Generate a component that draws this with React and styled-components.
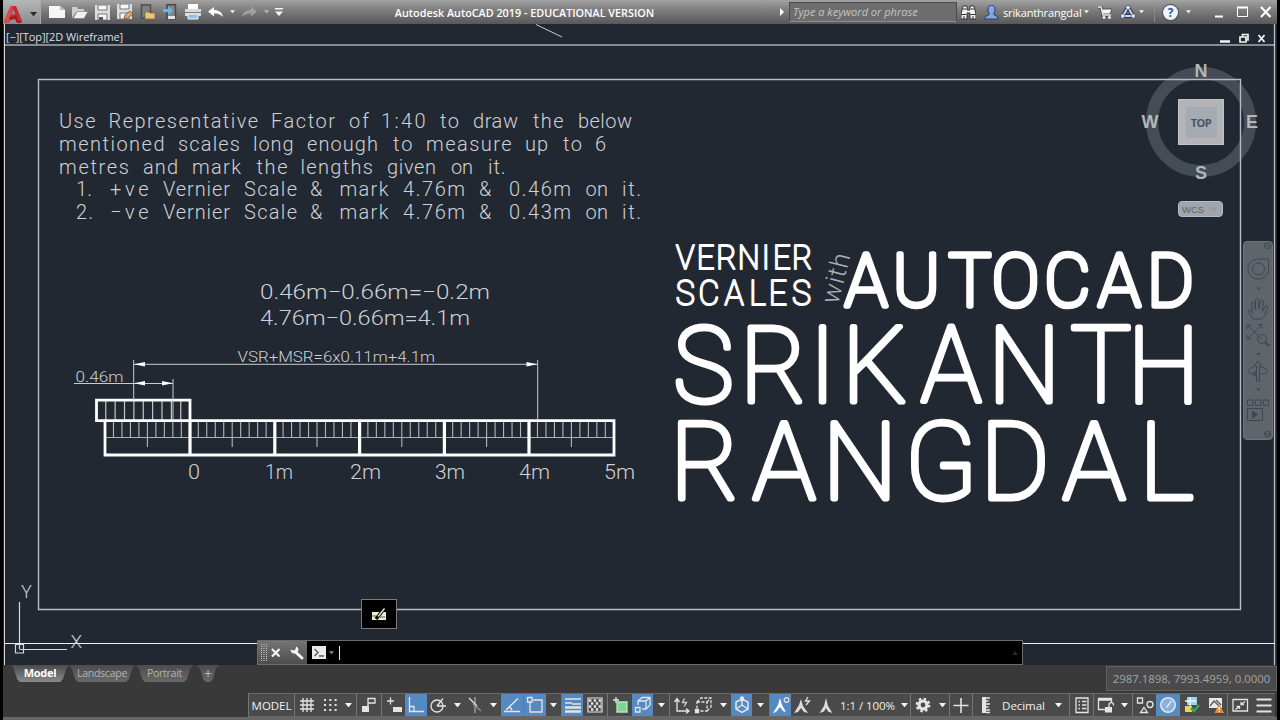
import React from 'react'
import styled, { createGlobalStyle } from 'styled-components'

const GlobalStyle = createGlobalStyle`
*{
  box-sizing: border-box;
}
body{
  margin: 0;
  background: #000;
  font-family: "Open Sans", "Noto Sans", sans-serif;
  overflow: hidden;
}
svg{
  display: block;
  flex: none;
}
`

/* ---------- title bar icons ---------- */

const Caret = ({ color = '#f2f2f2', size = 6 }) => (
  <svg width={size} height={size / 2 + 1} viewBox="0 0 8 5">
    <path d="M0 0h8L4 5z" fill={color} />
  </svg>
)

const titleIcons = {
  logo: (
    <svg width="19" height="18" viewBox="0 0 19 18">
      <path d="M0 17L6.500 1h5.500l6 15-3.500 1.500-2-4-6 1L4.500 18z" fill="#c62a30" />
      <path d="M7 9.500l2.300-5.500 2.200 5.500z" fill="#9b8a8a" />
      <path d="M0 17L6.500 1h2.500L4.500 18z" fill="#dd4a4e" />
      <path d="M5 12.500l7-2 2.500 6 3.500-.5-1 2-4 0-2-4-5 1z" fill="#a8181f" />
    </svg>
  ),
  newFile: (
    <svg width="16" height="13" viewBox="0 0 16 13">
      <path d="M0 0h11l5 4v8H0z" fill="#f6f6f6" />
      <path d="M11 0v4h5z" fill="#bdbdbd" />
    </svg>
  ),
  open: (
    <svg width="16" height="13" viewBox="0 0 16 13">
      <path d="M0 12V1h5l1 2h6v3H4z" fill="#cfcfcf" />
      <path d="M1 12.500L5 5.500h11l-4 7z" fill="#f1f1f1" stroke="#777" strokeWidth=".6" />
    </svg>
  ),
  save: (
    <svg width="15" height="15" viewBox="0 0 15 15">
      <path d="M0 0h15v15H0z" fill="#dcdcdc" />
      <path d="M3 0h9v5H3zM3 9h9v6H3z" fill="#f6f6f6" stroke="#777" strokeWidth="1" />
      <path d="M4 12h4v3H4z" fill="#555" />
    </svg>
  ),
  saveAs: (
    <svg width="17" height="16" viewBox="0 0 17 16">
      <path d="M0 0h15v15H0z" fill="#dcdcdc" />
      <path d="M3 0h9v5H3zM3 9h9v6H3z" fill="#f6f6f6" stroke="#777" strokeWidth="1" />
      <path d="M7 15l1-4 5-4 3 3-5 4z" fill="#e0a870" stroke="#6d5138" strokeWidth=".8" />
    </svg>
  ),
  openMobile: (
    <svg width="16" height="16" viewBox="0 0 16 16">
      <path d="M1.500 1h9v13h-9z" fill="#808080" stroke="#4c4c4c" strokeWidth="1.500" />
      <path d="M5 15V8h4l1 1h5v6z" fill="#eac476" stroke="#77663e" strokeWidth=".7" />
    </svg>
  ),
  saveMobile: (
    <svg width="15" height="16" viewBox="0 0 15 16">
      <path d="M4 .700h8.500v14H4z" fill="#858585" stroke="#484848" strokeWidth="1.500" />
      <path d="M5 12h7v3H5z" fill="#e3e3e3" />
      <path d="M0 5h5V2l5 4.500L5 11V8H0z" fill="#66b4e4" />
    </svg>
  ),
  print: (
    <svg width="16" height="16" viewBox="0 0 16 16">
      <path d="M3 0h10v5H3z" fill="#fff" />
      <path d="M0 5h16v7H0z" fill="#dadada" />
      <path d="M0 8h16v1H0z" fill="#777" />
      <path d="M3 10h10v5H3z" fill="#8fc3ea" stroke="#f2f2f2" strokeWidth="1" />
    </svg>
  ),
  undo: (
    <svg width="15" height="11" viewBox="0 0 15 11">
      <path d="M0 4.500L6 0v3c5 0 8 2 9 7-3-3-5-3.500-9-3.500v3z" fill="#fafafa" />
    </svg>
  ),
  redo: (
    <svg width="15" height="11" viewBox="0 0 15 11">
      <path d="M15 4.500L9 0v3C4 3 1 5 0 10c3-3 5-3.500 9-3.500v3z" fill="#a0a0a0" />
    </svg>
  ),
  more: (
    <svg width="8" height="8" viewBox="0 0 8 8">
      <path d="M0 0h8v1.500H0zM0 3.500h8L4 8z" fill="#f6f6f6" />
    </svg>
  ),
  binoculars: (
    <svg width="15" height="15" viewBox="0 0 15 15">
      <path d="M2 1h4v4h3V1h4l2 8v5H9V8H6v6H0V9z" fill="#f1f1f1" stroke="#333" strokeWidth="1" />
      <path d="M2 4h3M10 4h3M0 9.500h5M10 9.500h5M3 11v3M12 11v3" stroke="#333" strokeWidth="1" />
    </svg>
  ),
  user: (
    <svg width="15" height="15" viewBox="0 0 15 15">
      <path d="M4 4c0-5 7-5 7 0 0 3-1 4-1.500 5 .5 2 5 1.500 5 5H.5C.5 10.500 5 11 5.500 9 5 8 4 7 4 4z" fill="#85a7e3" stroke="#293d72" strokeWidth="1" />
    </svg>
  ),
  cart: (
    <svg width="15" height="13" viewBox="0 0 15 13">
      <path d="M0 1h3l2 8h8" fill="none" stroke="#33373f" strokeWidth="3" />
      <path d="M3.500 3H14l-2 5H5z" fill="#f1f3f6" stroke="#33373f" strokeWidth=".7" />
      <path d="M0 1h3l2 8h8" fill="none" stroke="#f1f3f6" strokeWidth="1.500" />
      <circle cx="6" cy="11.500" r="1.400" fill="#f1f3f6" />
      <circle cx="11.500" cy="11.500" r="1.400" fill="#f1f3f6" />
    </svg>
  ),
  a360: (
    <svg width="16" height="14" viewBox="0 0 16 14">
      <path d="M8 2L3 11h10z" fill="none" stroke="#2e3550" strokeWidth="4" strokeLinejoin="round" />
      <path d="M8 2L3 11h10z" fill="none" stroke="#ccd6f2" strokeWidth="2" strokeLinejoin="round" />
      <g fill="#dfe7fb" stroke="#2e3550" strokeWidth=".6">
        <circle cx="8" cy="2.500" r="2.200" />
        <circle cx="2.700" cy="11" r="2.200" />
        <circle cx="13.300" cy="11" r="2.200" />
      </g>
    </svg>
  ),
}

const Slot = styled.span`
  width: ${(p) => p.$w}px;
  height: 100%;
  display: flex;
  flex: none;
  align-items: center;
  justify-content: center;
`

const TitleBarStyle = styled.header`
  height: 24px;
  flex: none;
  display: flex;
  align-items: center;
  background: linear-gradient(#a2a2a2, #7b7b7b 45%, #585858);
  color: #fff;
  .app{
    gap: 7px;
    padding: 4px 3px 0 0;
    background: linear-gradient(#b7b7b7, #8c8c8c);
    border-right: 1px solid #a9a9a9;
  }
  .title{
    flex: 1;
    text-align: center;
    padding-right: 12px;
    font-size: 10.800px;
    font-weight: 600;
    white-space: nowrap;
  }
  .search{
    width: 168px;
    height: 20px;
    padding-left: 3px;
    line-height: 18px;
    font-size: 11px;
    font-style: italic;
    color: #c4c4c4;
    background: #6d6d6d;
    border: 1px solid #4a4a4a;
    border-bottom-color: #8d8d8d;
  }
  .name{
    width: 80px;
    font-size: 11px;
    letter-spacing: -0.15px;
    white-space: nowrap;
  }
  .sep{
    width: 1px;
    height: 20px;
    background: #8a8a8a;
  }
  .help{
    width: 15px;
    height: 15px;
    border-radius: 50%;
    background: #eef2fb;
    color: #35569b;
    font-size: 12px;
    font-weight: 700;
    line-height: 15px;
    text-align: center;
    box-shadow: 0 0 0 1px #4a5160;
  }
`

const TitleBar = () => {
  return (
    <TitleBarStyle>
      <Slot className="app" $w={38}>
        {titleIcons.logo}
        <Caret color="#2b2b2b" size={7} />
      </Slot>
      <Slot $w={5} />
      <Slot $w={22}>{titleIcons.newFile}</Slot>
      <Slot $w={23}>{titleIcons.open}</Slot>
      <Slot $w={23}>{titleIcons.save}</Slot>
      <Slot $w={23}>{titleIcons.saveAs}</Slot>
      <Slot $w={22}>{titleIcons.openMobile}</Slot>
      <Slot $w={23}>{titleIcons.saveMobile}</Slot>
      <Slot $w={22}>{titleIcons.print}</Slot>
      <Slot $w={23}>{titleIcons.undo}</Slot>
      <Slot $w={10}><Caret size={5} /></Slot>
      <Slot $w={24}>{titleIcons.redo}</Slot>
      <Slot $w={10}><Caret size={5} color="#bbb" /></Slot>
      <Slot $w={15}>{titleIcons.more}</Slot>
      <div className="title">Autodesk AutoCAD 2019 - EDUCATIONAL VERSION</div>
      <Slot $w={14}>
        <svg width="4" height="8" viewBox="0 0 4 8"><path d="M0 0l4 4-4 4z" fill="#fff" /></svg>
      </Slot>
      <div className="search">Type a keyword or phrase</div>
      <Slot $w={23}>{titleIcons.binoculars}</Slot>
      <Slot $w={23}>{titleIcons.user}</Slot>
      <div className="name">srikanthrangdal</div>
      <Slot $w={6}><Caret size={5} /></Slot>
      <Slot $w={32}>{titleIcons.cart}</Slot>
      <Slot $w={14}>{titleIcons.a360}</Slot>
      <Slot $w={12}><Caret size={5} /></Slot>
      <Slot $w={7} />
      <div className="sep" />
      <Slot $w={31}><div className="help">?</div></Slot>
      <Slot $w={4}><Caret size={5} /></Slot>
      <Slot $w={87}>
        <svg width="87" height="16" viewBox="0 0 87 16">
          <path d="M25 12.500h8" stroke="#fff" strokeWidth="2" />
          <path d="M47.500 3.500h10v9h-10z" fill="none" stroke="#fff" />
          <path d="M47 3.500h11" stroke="#fff" strokeWidth="2" />
          <path d="M71 3l9.500 10M80.500 3L71 13" stroke="#fff" strokeWidth="2.200" />
        </svg>
      </Slot>
    </TitleBarStyle>
  )
}

/* ---------- model space ---------- */

// every word: [text, left, right]
const question = [
  { y: 128, words: [['Use', 59, 95.5], ['Representative', 108.5, 258], ['Factor', 271, 335], ['of', 349, 369], ['1:40', 381, 425.5], ['to', 440, 459], ['draw', 473, 518], ['the', 533, 563.5], ['below', 578, 632]] },
  { y: 151, words: [['mentioned', 59, 164.5], ['scales', 178, 240], ['long', 253, 293.5], ['enough', 307, 378], ['to', 393, 412.5], ['measure', 426, 511.5], ['up', 525, 548], ['to', 563, 582], ['6', 595, 606]] },
  { y: 173.5, words: [['metres', 59, 129], ['and', 143, 178], ['mark', 192, 241], ['the', 256.5, 287.5], ['lengths', 300.5, 373], ['given', 387, 436], ['on', 451, 473], ['it.', 488, 505.5]] },
  { y: 196, words: [['1.', 76, 92], ['+ve', 110, 148.5], ['Vernier', 163, 230], ['Scale', 244, 297], ['&', 310, 326], ['mark', 339.5, 388.5], ['4.76m', 403, 465], ['&', 479, 495], ['0.46m', 509, 571], ['on', 585.5, 608], ['it.', 622, 641]] },
  { y: 218.5, words: [['2.', 76, 93], ['−ve', 110, 148.5], ['Vernier', 163, 230], ['Scale', 244, 297], ['&', 310, 326], ['mark', 339.5, 388.5], ['4.76m', 403, 465], ['&', 479, 495], ['0.43m', 509, 571], ['on', 585.5, 608], ['it.', 622, 641]] },
]

// letter centres of the poster lines
const poster = [
  { text: 'VERNIER', y: 269, size: 33, weight: 2.1, sx: 0.94, at: [685.3, 705.5, 726.5, 748.8, 765.7, 781.9, 802.2] },
  { text: 'SCALES', y: 304.8, size: 35, weight: 2.1, sx: 0.92, at: [685.3, 708.9, 734.2, 757.5, 777.8, 801.5] },
  { text: 'AUTOCAD', y: 305.8, size: 73, weight: 5.6, sx: 0.97, at: [866.1, 916.4, 969.9, 1015.7, 1067.4, 1119.4, 1170.3] },
  { text: 'SRIKANTH', y: 401.8, size: 105, weight: 5, sx: 0.97, at: [703.4, 773.5, 822.5, 874.7, 951.2, 1024.3, 1100.9, 1163.6] },
  { text: 'RANGDAL', y: 499, size: 108, weight: 5, sx: 0.98, at: [704.8, 784, 859.9, 941, 1015, 1094.2, 1166.5] },
]

const METRE = 84.8
const metres = [['0', 188, 200], ['1m', 265, 293], ['2m', 350, 381], ['3m', 435, 465], ['4m', 519, 550], ['5m', 604, 635]]

const CadText = styled.text`
  font-family: Roboto, "Open Sans", sans-serif;
  font-weight: 300;
  font-size: ${(p) => p.$size || 20}px;
  fill: #cfd1d5;
  white-space: pre;
`

const PosterText = styled.text`
  font-family: Roboto, "Open Sans", sans-serif;
  font-weight: 100;
  font-size: ${(p) => p.$size}px;
  text-anchor: middle;
  fill: #fff;
  stroke: #fff;
  stroke-width: ${(p) => p.$weight}px;
  stroke-linejoin: round;
  stroke-linecap: round;
`

const Fit = ({ x1, x2, y, size, children }) => (
  <CadText x={x1} y={y} $size={size} textLength={x2 - x1} lengthAdjust="spacingAndGlyphs">{children}</CadText>
)

const VernierScale = () => {
  const ticks = []
  for (let i = 1; i < 60; i++) {
    const x = 105 + (i * METRE) / 10
    if (i % 10) ticks.push(`M${x} 421V${i % 10 === 5 ? 447 : 437.5}`)
  }
  const vernierTicks = [1, 2, 3, 4, 5, 6, 7, 8, 9].map((i) => `M${96.400 + i * 9.370} 401V420`)
  return (
    <g fill="none">
      <path d={ticks.join('')} stroke="#b4b7bb" strokeWidth="1.100" />
      <path d={vernierTicks.join('')} stroke="#c4c6ca" strokeWidth="1.200" />
      <path d="M105 437.500H614" stroke="#a9acb1" />
      <path d="M96.500 400.200H190v20.500H96.500zM105 420.700H614v34.300H105z" stroke="#fff" strokeWidth="2.800" />
      <path d="M190 420v35M274.800 420v35M359.600 420v35M444.400 420v35M529 420v35" stroke="#fff" strokeWidth="3.200" />
      {/* dimensions */}
      <path d="M133.700 360v40M537.700 360v60M134 364.300H537M74 383.500H173M173 379v41" stroke="#c9cbcf" />
      <path d="M134 364.300l11-2.200v4.400zM537.500 364.300l-11-2.200v4.400zM134 383.300l11-2.200v4.400zM173 383.300l-11-2.200v4.400z" fill="#fff" />
    </g>
  )
}

const Drawing = () => (
  <svg width="1274" height="641" viewBox="3 24 1274 641">
    <g fill="none">
      <path d="M4.500 24V665" stroke="#d8d8dc" />
      <path d="M1274.500 24V665" stroke="#b9bcc1" strokeWidth="1.300" />
      <path d="M4 45H1275M4 643.500H1275" stroke="#eceef0" strokeWidth="1.200" />
      <path d="M38.500 79.500H1240.500V609.500H38.500z" stroke="#b9bcc2" strokeWidth="1.400" />
      <path d="M536 24.500L562 37" stroke="#c9cbcf" />
      <path d="M19.500 602V649M15.500 644.500h8v8.500h-8zM19.500 649.500H67" stroke="#d6d8dc" strokeWidth="1.200" />
    </g>
    {question.map((line) => (
      <CadText key={line.y} y={line.y}>
        {line.words.map(([word, x1, x2]) => (
          <React.Fragment key={x1}>
            <tspan x={x1} textLength={x2 - x1}>{word}</tspan>
            {' '}
          </React.Fragment>
        ))}
      </CadText>
    ))}
    <Fit x1={260} x2={490} y={298.5}>0.46m−0.66m=−0.2m</Fit>
    <Fit x1={260} x2={470} y={325}>4.76m−0.66m=4.1m</Fit>
    <Fit x1={237.500} x2={435} y={362} size={14.500}>VSR+MSR=6x0.11m+4.1m</Fit>
    <Fit x1={75.500} x2={123.500} y={381.500} size={14.500}>0.46m</Fit>
    <VernierScale />
    {metres.map(([label, x1, x2]) => (
      <Fit key={label} x1={x1} x2={x2} y={478.5}>{label}</Fit>
    ))}
    {poster.map((line) => (
      <PosterText
        key={line.text}
        $size={line.size}
        $weight={line.weight}
        transform={`scale(${line.sx} 1)`}
        x={line.at.map((x) => x / line.sx).join(' ')}
        y={line.y}
      >
        {line.text}
      </PosterText>
    ))}
    <CadText $size={26} textLength="51" opacity=".8" transform="translate(838 305) rotate(-76)">with</CadText>
    <CadText $size={18} x="21" y="598">Y</CadText>
    <CadText $size={19} x="70.500" y="648">X</CadText>
  </svg>
)

const CanvasStyle = styled.main`
  position: relative;
  height: 641px;
  flex: none;
  background: #222831;
`

const ViewportLabel = styled.div`
  position: absolute;
  left: 3px;
  top: 5px;
  font-size: 11px;
  line-height: 16px;
  letter-spacing: -0.07px;
  color: #dcdee2;
  white-space: nowrap;
`

const ViewportButtons = styled.div`
  position: absolute;
  right: 7px;
  top: 9px;
`

const ViewCube = styled.div`
  position: absolute;
  left: 1143px;
  top: 43px;
  width: 110px;
  height: 110px;
  display: grid;
  place-items: center;
  border-radius: 50%;
  border: 12px solid rgba(170, 185, 200, 0.25);
  .face{
    width: 46px;
    height: 46px;
    display: grid;
    place-items: center;
    background: #b3b4b7;
    border: 1px solid #c2c3c5;
  }
  .label{
    width: 31px;
    height: 31px;
    line-height: 31px;
    text-align: center;
    font-size: 11px;
    font-weight: 700;
    letter-spacing: -0.5px;
    color: #4a525e;
    background: #a5abb3;
  }
`

const Compass = styled.span`
  position: absolute;
  left: ${(p) => p.$x}px;
  top: ${(p) => p.$y}px;
  width: 20px;
  line-height: 20px;
  text-align: center;
  font-family: "Liberation Sans", sans-serif;
  font-size: 18px;
  font-weight: 700;
  color: #b4b6b9;
`

const Wcs = styled.div`
  position: absolute;
  left: 1175px;
  top: 177px;
  width: 45px;
  height: 16px;
  padding: 0 5px 0 3px;
  display: flex;
  align-items: center;
  justify-content: space-between;
  font-family: "Liberation Sans", sans-serif;
  font-size: 9.500px;
  color: #5c626b;
  background: #a1a4aa;
  border: 1px solid #b9bbc0;
  border-radius: 4px;
`

const NavBar = styled.div`
  position: absolute;
  left: 1240px;
  top: 217px;
  width: 30px;
  height: 199px;
  background: #60656c;
  border: 1px solid #6f747b;
  border-radius: 4px;
`

const CommandLine = styled.div`
  position: absolute;
  left: 254px;
  top: 616px;
  width: 766px;
  height: 25px;
  display: flex;
  align-items: center;
  background: #000;
  border: 1px solid #6b6b6b;
  .tools{
    width: 49px;
    height: 100%;
    display: flex;
    align-items: center;
    background: linear-gradient(#747474, #4d4d4d);
  }
  .prompt{
    width: 24px;
    display: flex;
    align-items: center;
    gap: 3px;
    margin-left: 5px;
  }
  .cursor{
    width: 1px;
    height: 14px;
    margin-left: 3px;
    background: #e8e8e8;
  }
  .up{
    margin-left: auto;
    margin-right: 4px;
  }
`

const CommandHint = styled.div`
  position: absolute;
  left: 358px;
  top: 575px;
  width: 36px;
  height: 30px;
  display: grid;
  place-items: center;
  background: #000;
  border: 1px solid #7b7b7b;
`

const ModelSpace = () => {
  return (
    <CanvasStyle>
      <Drawing />
      <ViewportLabel>[−][Top][2D Wireframe]</ViewportLabel>
      <ViewportButtons>
        <svg width="50" height="11" viewBox="0 0 50 11">
          <path d="M0 8.500h10" stroke="#f2f2f2" strokeWidth="2.500" />
          <path d="M20 4h6v5h-6zM22.500 4V1.500H28V7h-2" fill="none" stroke="#f2f2f2" strokeWidth="1.700" />
          <path d="M38.500 2l6 7M44.500 2l-6 7" stroke="#f2f2f2" strokeWidth="1.900" />
        </svg>
      </ViewportButtons>
      <ViewCube>
        <div className="face"><div className="label">TOP</div></div>
      </ViewCube>
      <Compass $x={1188} $y={37}>N</Compass>
      <Compass $x={1137} $y={88}>W</Compass>
      <Compass $x={1239} $y={88}>E</Compass>
      <Compass $x={1188} $y={139}>S</Compass>
      <Wcs>
        WCS
        <svg width="8" height="5" viewBox="0 0 8 5"><path d="M.5.500l3.500 3 3.500-3" fill="none" stroke="#8b9097" /></svg>
      </Wcs>
      <NavBar>
        <svg width="28" height="197" viewBox="1244 242 28 197" fill="none" stroke="#40464e" strokeWidth="1">
          <circle cx="1267.500" cy="245.500" r="3" />
          <path d="M1266 244.500l3 2" />
          <path d="M1258 259h10.500v11c0 5-5 9-10.500 9s-10-4-10-10 5-10 10-10z" />
          <circle cx="1258.500" cy="269" r="6" />
          <path d="M1256.500 287.500h4l-2 2.500zM1256.500 353h4l-2 2.500zM1256.500 388.500h4l-2 2.500z" fill="#40464e" stroke="none" />
          <path d="M1253 319l-5-8c1-2 3 0 4.500 2l-1-10c1-2 3-1 3 1l1 6V300c1-2 3-1 3 0l.5 9 1.500-8c1-2 3-1 3 1l-1 9 3-5c2-1 3 1 2 2l-3 8-3 3z" />
          <path d="M1247.500 325l14 14M1247.500 339l14-14M1247 329v-4h4M1258 324.500h4v4M1247 335v4h4" />
          <circle cx="1262" cy="339" r="4.500" />
          <path d="M1265 342l4 4" strokeWidth="2.200" />
          <path d="M1256.500 381v-15h-2l3.500-5 3.500 5h-2v15zM1254 367c-8 2-8 7 2 7M1261 367c9 2 9 7-1 7M1256 371.500v5l-4-2.500z" />
          <path d="M1247.500 400h5.500v5.500h-5.500zM1255.500 400h5.500v5.500h-5.500zM1263.500 400h5v5.500h-5zM1247.500 408.500h15v12h-15z" />
          <path d="M1252.500 411l5 3.500-5 3.500z" fill="#40464e" />
          <circle cx="1267.500" cy="434" r="3" />
          <path d="M1265 434h5" />
        </svg>
      </NavBar>
      <CommandHint>
        <svg width="14" height="13" viewBox="0 0 14 13">
          <path d="M0 4h14v8H0z" fill="#e9efc9" />
          <path d="M0 8h4M8 9h5" stroke="#5d6350" strokeWidth="1.200" />
          <path d="M4 11L12 1" stroke="#000" strokeWidth="3.500" />
          <path d="M6 8.500L12.500.500" stroke="#e3e5da" strokeWidth="1.500" />
        </svg>
      </CommandHint>
      <CommandLine>
        <div className="tools">
          <svg width="49" height="23" viewBox="0 0 49 23">
            <path d="M3.500 3v17M6 3v17M8.500 3v17" stroke="#c9c9c9" strokeWidth="1" strokeDasharray="1 1" />
            <path d="M14 8l7.500 7.500M21.500 8L14 15.500" stroke="#f4f4f4" strokeWidth="2.200" />
            <path d="M37.500 11l6.500 6" stroke="#f4f4f4" strokeWidth="3" strokeLinecap="round" />
            <path d="M32.500 8.500c0 4 4 5 6.500 3s1.500-5-1-6l-.5 3-2 1z" fill="#f4f4f4" />
          </svg>
        </div>
        <div className="prompt">
          <svg width="14" height="13" viewBox="0 0 14 13">
            <path d="M0 0h14v13H0z" fill="#e9e9ee" />
            <path d="M2.500 3L6 6.500 2.500 10M7 10h5" fill="none" stroke="#5a5a62" strokeWidth="1.300" />
          </svg>
          <Caret size={5} color="#8d8d8d" />
        </div>
        <div className="cursor" />
        <svg className="up" width="6" height="4" viewBox="0 0 6 4"><path d="M0 4l3-4 3 4z" fill="#2a2a2a" /></svg>
      </CommandLine>
    </CanvasStyle>
  )
}

/* ---------- layout tabs ---------- */

const TabsStyle = styled.nav`
  height: 26px;
  flex: none;
  display: flex;
  padding-left: 8px;
  background: #393939;
  .coords{
    width: 171px;
    height: 25px;
    margin: 1px 0 0 auto;
    text-align: center;
    line-height: 24px;
    font-size: 11.400px;
    color: #a3a3a3;
    background: #4a4a4a;
    border: 1px solid #616161;
    white-space: nowrap;
  }
`

const Tab = styled.div`
  width: ${(p) => p.$w}px;
  height: 17px;
  margin-right: ${(p) => p.$gap || 0}px;
  text-align: center;
  line-height: 16px;
  font-size: ${(p) => p.$size || 10.5}px;
  font-weight: ${(p) => (p.$active ? 700 : 400)};
  letter-spacing: -0.25px;
  color: ${(p) => (p.$active ? '#fff' : '#b4b4b4')};
  background: ${(p) => (p.$active ? 'linear-gradient(#4b4b4b, #8a8a8a)' : 'linear-gradient(#4c4c4c, #686868)')};
  clip-path: polygon(0 0, 100% 0, calc(100% - 3px) 4px, calc(100% - 6px) 14px, calc(100% - 9px) 100%, 9px 100%, 6px 14px, 3px 4px);
`

const Tabs = () => (
  <TabsStyle>
    <Tab $w={58} $size={11} $active>Model</Tab>
    <Tab $w={66} $gap={1}>Landscape</Tab>
    <Tab $w={57} $gap={4}>Portrait</Tab>
    <Tab $w={22} $size={15}>+</Tab>
    <div className="coords">2987.1898, 7993.4959, 0.0000</div>
  </TabsStyle>
)

/* ---------- status bar ---------- */

const icon = (children, props = {}) => (
  <svg width="20" height="20" viewBox="0 0 20 20" fill="none" stroke="#e4e4e4" strokeWidth="1.300" {...props}>
    {children}
  </svg>
)

const statusIcons = {
  grid: icon(<path d="M6 3v14M10 3v14M14 3v14M3 6h14M3 10h14M3 14h14" />),
  snap: icon(<path d="M4 5h13M4 10h13M4 15h13" strokeWidth="2" strokeDasharray="2 3.300" />),
  infer: icon(<><path d="M3 11h7v6H3z" fill="#e4e4e4" stroke="none" /><path d="M9 12V3.500h7V8h-7" /></>),
  dynamic: icon(<><path d="M3 6h7M6.500 2.500v7" /><path d="M9 12h9v5H9z" fill="#e4e4e4" stroke="none" /></>),
  ortho: icon(<path d="M3.500 2v14.500H18M3.500 11.500h4.500v5" />),
  polar: icon(<><circle cx="9" cy="11" r="6" /><path d="M9 11h9M9 11l6-7.500" /></>),
  iso: icon(<><path d="M10 2v16" stroke="#9fae8f" /><path d="M4 3l8 8" /><path d="M8 9l8 7" stroke="#b08a80" /></>),
  track: icon(<path d="M2 16.500h16M4 15L16 3.500M7 11l3 4" strokeWidth="1.500" />),
  osnap: icon(<><path d="M5 7v10h12V5H8" /><path d="M2.500 2.500h4.500v4.500H2.500z" /></>),
  weight: icon(<><path d="M2 4h16M2 8h7M9 9h9" strokeWidth="1.600" /><path d="M2 12.500h16M2 16.500h16" strokeWidth="2.400" /></>),
  transparency: icon(
    <>
      <path d="M3 3h14v14H3z" strokeWidth="1.200" />
      <path d="M4 5.500h12M6 8.500h10M4 11.500h12M6 14.500h10" strokeWidth="2.400" strokeDasharray="2.400 2.400" />
    </>
  ),
  cycle: icon(<><path d="M3 5h6M6 2v6" /><path d="M7 7h10v10H7z" fill="#7fd694" stroke="#b4e8c0" /></>),
  osnap3d: icon(<path d="M2.500 12.500H7V17H2.500zM5 10V6h8v8H9M5 6l4-3.500h8V10l-4 4M13 6l4-3.500" />),
  ucs: icon(<><path d="M5 4v12h12M2.500 7L5 3.500 7.500 7M14 13.500l3 2.500-3 2.500" /><path d="M12.500 3.500l-2 4h4l-2.500 4" stroke="#cfcfcf" /></>),
  filter: icon(<><path d="M3 7h10v9H3zM3 7l4-4h10v9l-4 4M13 7l4-4" strokeDasharray="3 1.500" /><path d="M1.500 14.500h3v3h-3z" fill="#e4e4e4" /></>),
  gizmo: icon(<><circle cx="10" cy="3.500" r="1.500" fill="#fff" /><path d="M10 4v6M10 10l-6 4M10 10l6 4M4 7l6-3 6 3v7l-6 3.500L4 14z" strokeWidth="1.500" /></>),
  annoVisible: icon(<><path d="M9 3l2 7 4 7-3-1-3-4-4 5-3 1 5-8z" fill="#fff" stroke="none" /><circle cx="15.500" cy="5" r="2.300" /></>),
  annoAuto: icon(<><path d="M8 4l2 7 5 7-4-1-3-4-3 4-4 1 5-8z" fill="#dcdcdc" stroke="none" /><path d="M15 2l-2.500 4h4L13 10" /></>),
  annoScale: icon(<path d="M10 3l2 8 4.500 7-4.500-1.500-2-3.500-2 3.500L3.500 18 8 11z" fill="#dcdcdc" stroke="none" />),
  gear: icon(<><circle cx="10" cy="10" r="4" strokeWidth="3.200" /><circle cx="10" cy="10" r="6.200" strokeWidth="2.400" strokeDasharray="2.430 2.430" /></>),
  plus: icon(<path d="M10 3v15M2.500 10.500h15" strokeWidth="1.600" />),
  ruler: icon(<><path d="M6 2h4v16H6z" fill="#e4e4e4" stroke="none" /><path d="M10 3h4M10 6h2.500M10 9h4M10 12h2.500M10 15h4M10 17.500h4" /></>),
  quick: icon(<path d="M4 3h12v14.500H4zM6.500 6.500H8M10 6.500h4.500M6.500 10H8M10 10h4.500M6.500 13.500H8M10 13.500h4.500" />),
  lockUi: icon(<><path d="M9 14.500H2.500v-11h13V8M2.500 5h13" /><path d="M9 12h7v5.500H9z" fill="#e4e4e4" stroke="none" /><path d="M13 12V9.500c0-2.500 4.500-2.500 4.500 0v1" /></>),
  isolate: icon(<><path d="M2.500 3h5v5h-5zM9 12.500l3.500 5h-7z" /><circle cx="15" cy="9.500" r="3" /></>),
  perf: icon(<><circle cx="10" cy="10" r="7.200" fill="#86b2e2" strokeWidth="1.600" /><path d="M8.500 12.500l5-6.500" strokeWidth="1.600" /></>),
  content: icon(
    <>
      <path d="M5 2h10v8H5z" fill="#9fd0f0" stroke="none" />
      <path d="M3 6h11M8 2v9" stroke="#e9f6ff" />
      <path d="M3 11h7v6H3z" fill="#f0d44c" stroke="none" />
      <path d="M9 13l3 3 5-6" stroke="#3f9f5c" strokeWidth="2.600" />
    </>
  ),
  warning: icon(
    <>
      <path d="M3 3h13v10H3z" fill="#e9e9e9" stroke="none" />
      <path d="M4 11l4-5 5 5M10 5l5 5" stroke="#555" />
      <path d="M13 9l5 9H8.500z" fill="#e58a3c" stroke="none" />
      <path d="M13.200 12v3M13.200 16v1" stroke="#fff" />
    </>
  ),
  clean: icon(<path d="M3 4.500h14.500v11.500H3zM11 9.500l4-3M11 7v2.500h3M9.500 11.500l-4 3M9.500 14v-2.500h-3" />),
  menu: icon(<path d="M2.500 4.500h15M2.500 10.500h15M2.500 16.500h15" strokeWidth="2" />),
}

const StatusStyle = styled.footer`
  height: 29px;
  flex: none;
  display: flex;
  align-items: flex-start;
  padding: 2px 0 0 245px;
  background: linear-gradient(#393939 0 26px, #666 26px);
`

const Cell = styled.div`
  width: ${(p) => p.$w}px;
  height: 24px;
  flex: none;
  display: flex;
  align-items: center;
  justify-content: center;
  font-size: 11.500px;
  letter-spacing: -0.05px;
  white-space: nowrap;
  color: #f0f0f0;
  background: ${(p) => (p.$on ? '#5489c2' : '#4a4a4a')};
  border-top: 1px solid #6a6a6a;
  border-bottom: 1px solid #6a6a6a;
  border-left: ${(p) => (p.$sep ? '1px solid #757575' : 'none')};
`

const caret = <Caret size={7} />

// [width, content, flags]
const cells = [
  [46, 'MODEL', 'sep'],
  [25, 'grid', 'sep'], [21, 'snap'], [16, 'caret'],
  [25, 'infer', 'sep'], [24, 'dynamic', 'sep'], [22, 'ortho', 'on'], [22, 'polar'], [16, 'caret'], [20, 'iso'], [16, 'caret'],
  [22, 'track', 'on'], [23, 'osnap', 'on sep'], [15, 'caret'],
  [22, 'weight', 'on sep'], [24, 'transparency'],
  [25, 'cycle', 'sep'], [21, 'osnap3d', 'on'], [16, 'caret'],
  [24, 'ucs', 'sep'], [22, 'filter'], [16, 'caret'], [21, 'gizmo', 'on'], [17, 'caret'],
  [22, 'annoVisible', 'on sep'], [23, 'annoAuto'], [23, 'annoScale'], [61, '1:1 / 100%'], [12, 'caret'],
  [25, 'gear', 'sep'], [14, 'caret'], [23, 'plus', 'sep'],
  [27, 'ruler', 'sep'], [49, 'Decimal'], [21, 'caret'],
  [24, 'quick', 'sep'], [24, 'lockUi', 'sep'], [15, 'caret'],
  [24, 'isolate', 'sep'], [24, 'perf', 'on'], [24, 'content'], [23, 'warning'],
  [25, 'clean', 'sep'], [23, 'menu'],
]

const StatusBar = () => (
  <StatusStyle>
    {cells.map(([w, content, flags = ''], i) => (
      <Cell key={i} $w={w} $on={flags.includes('on')} $sep={flags.includes('sep')}>
        {content === 'caret' ? caret : statusIcons[content] || content}
      </Cell>
    ))}
  </StatusStyle>
)

const Window = styled.div`
  width: 1280px;
  height: 720px;
  padding: 0 3px;
  display: flex;
  flex-direction: column;
  background: #000;
`

const App = () => {
  return (
    <Window>
      <GlobalStyle />
      <TitleBar />
      <ModelSpace />
      <Tabs />
      <StatusBar />
    </Window>
  )
}

export default App
